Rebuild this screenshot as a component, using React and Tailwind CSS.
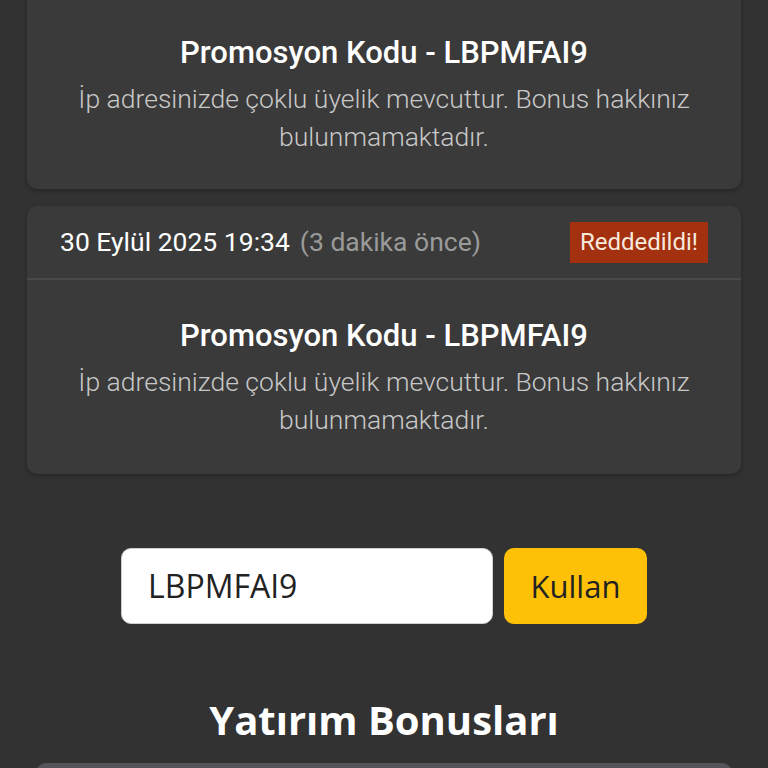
import React from "react";

const roboto = { fontFamily: "Roboto, 'Noto Sans', sans-serif" };
const open = { fontFamily: "'Open Sans', 'Noto Sans', sans-serif" };

function Body() {
  return (
    <div className="flex flex-col items-center text-center">
      <div className="text-[31px] leading-[40px] font-medium text-white">Promosyon Kodu - LBPMFAI9</div>
      <div className="mt-[7px] text-[26.5px] leading-[38px] font-light text-[#c8c8c8] px-[30px]">
        İp adresinizde çoklu üyelik mevcuttur. Bonus hakkınız bulunmamaktadır.
      </div>
    </div>
  );
}

export default function App() {
  return (
    <div className="w-[768px] h-[768px] overflow-hidden bg-[#323232]" style={roboto}>
      <div className="px-[27px]">
        <div className="-mt-[20px] pt-[53px] pb-[33px] rounded-[10px] bg-[#3a3a3a] shadow-[0_2px_4px_rgba(0,0,0,0.25)]">
          <Body />
        </div>
        <div className="mt-[17px] rounded-[10px] bg-[#3a3a3a] shadow-[0_2px_4px_rgba(0,0,0,0.25)]">
          <div className="h-[74px] flex items-center justify-between px-[33px] border-b-2 border-[#494949]">
            <div className="flex items-center text-[26.5px]">
              <span className="text-white">30 Eylül 2025 19:34</span>
              <span className="ml-[10px] text-[#9a9a9a]">(3 dakika önce)</span>
            </div>
            <div className="h-[41px] px-[10px] flex items-center bg-[#a3300e] text-[#f7e9dc] text-[24px]">Reddedildi!</div>
          </div>
          <div className="pt-[36px] pb-[35px]">
            <Body />
          </div>
        </div>
      </div>
      <div className="mt-[74px] flex justify-center gap-[11px]" style={open}>
        <div className="w-[372px] h-[76px] rounded-[10px] bg-white border border-[#d0d0d0] flex items-center pl-[26px] text-[32px] text-[#222]">LBPMFAI9</div>
        <div className="w-[143px] h-[76px] rounded-[10px] bg-[#ffc107] flex items-center justify-center text-[31px] text-[#222]">Kullan</div>
      </div>
      <div className="mt-[70px] text-center text-[40px] leading-[52px] font-bold text-white" style={open}>Yatırım Bonusları</div>
      <div className="mx-[36px] mt-[17px] h-[40px] rounded-[10px] bg-[#53555a]" />
    </div>
  );
}
